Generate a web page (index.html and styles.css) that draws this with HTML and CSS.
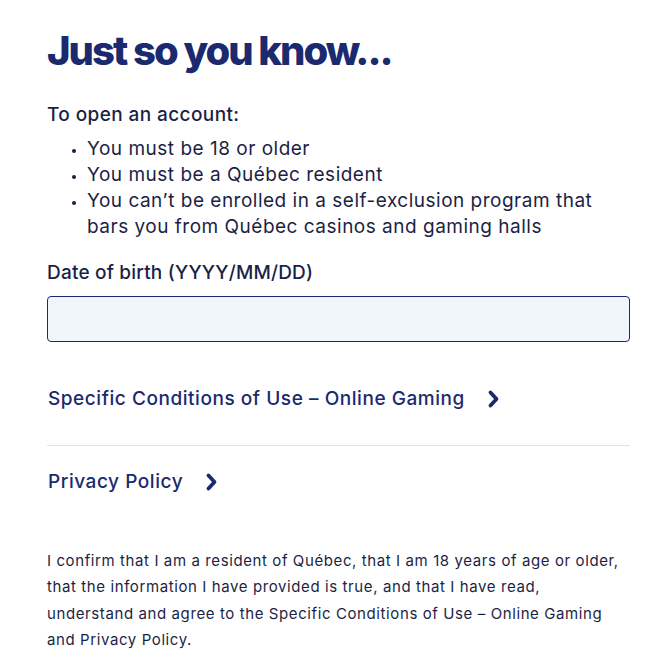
FILE: index.html
```html
<!DOCTYPE html>
<html lang="en">
<head>
  <meta charset="UTF-8">
  <meta name="viewport" content="width=device-width, initial-scale=1.0">
  <title>Just so you know</title>
  <link rel="stylesheet" href="styles.css">
</head>
<body>

<div class="panel">
  <h1 class="title">Just so you know...</h1>

  <p class="lead">To open an account:</p>
  <ul class="rules">
    <li>You must be 18 or older</li>
    <li>You must be a Québec resident</li>
    <li>You can’t be enrolled in a self-exclusion program that bars you from Québec casinos and gaming halls</li>
  </ul>

  <label class="label" for="dob">Date of birth (YYYY/MM/DD)</label>
  <input class="field" type="text" id="dob">

  <a class="link first" href="#">Specific Conditions of Use – Online Gaming
    <svg class="chev" width="14" height="20" viewBox="0 0 14 20"><path d="M3.5 3.5l6 6.5-6 6.5" fill="none" stroke="currentColor" stroke-width="3.8" stroke-linecap="round" stroke-linejoin="round"/></svg>
  </a>
  <div class="sep"></div>
  <a class="link" href="#">Privacy Policy
    <svg class="chev" width="14" height="20" viewBox="0 0 14 20"><path d="M3.5 3.5l6 6.5-6 6.5" fill="none" stroke="currentColor" stroke-width="3.8" stroke-linecap="round" stroke-linejoin="round"/></svg>
  </a>

  <p class="confirm">I confirm that I am a resident of Québec, that I am 18 years of age or older, that the information I have provided is true, and that I have read, understand and agree to the Specific Conditions of Use – Online Gaming and Privacy Policy.</p>
</div>

</body>
</html>
```

FILE: styles.css
```css
body {
  margin: 0;
  background: #fff;
  color: #1c1f45;
  font-family: Inter, "Noto Sans", sans-serif;
}
.panel {
  display: flex;
  flex-direction: column;
  width: 583px;
  padding: 26px 0 0 47px;
}
.title {
  margin: 0;
  font-size: 40px;
  font-weight: 800;
  letter-spacing: -2px;
  line-height: 50px;
  color: #1b2a6e;
}
.lead {
  margin: 26px 0 0;
  font-size: 19px;
  font-weight: 500;
  letter-spacing: 0.4px;
  line-height: 26px;
}
.rules {
  margin: 8px 0 0;
  padding-left: 40px;
  font-size: 19px;
  letter-spacing: 0.5px;
  line-height: 26px;
}
.rules li::marker {
  font-size: 13px;
}
.label {
  margin-top: 20px;
  font-size: 19px;
  font-weight: 500;
  letter-spacing: 0.2px;
  line-height: 26px;
}
.field {
  margin-top: 10px;
  height: 46px;
  box-sizing: border-box;
  border: 1px solid #1b2a6e;
  border-radius: 4px;
  background: #f1f6fa;
}
.link {
  display: flex;
  align-items: center;
  gap: 22px;
  color: #1b2a6e;
  text-decoration: none;
  font-size: 19px;
  font-weight: 500;
  letter-spacing: 0.55px;
  line-height: 26px;
  padding: 0 0 0 1px;
}
.link.first {
  margin-top: 44px;
}
.chev {
  flex: none;
}
.sep {
  height: 1px;
  background: #e3e3e3;
  margin: 33px 0 23px;
}
.confirm {
  margin: 53px 0 0;
  font-size: 15px;
  letter-spacing: 0.6px;
  line-height: 26.3px;
}
```
